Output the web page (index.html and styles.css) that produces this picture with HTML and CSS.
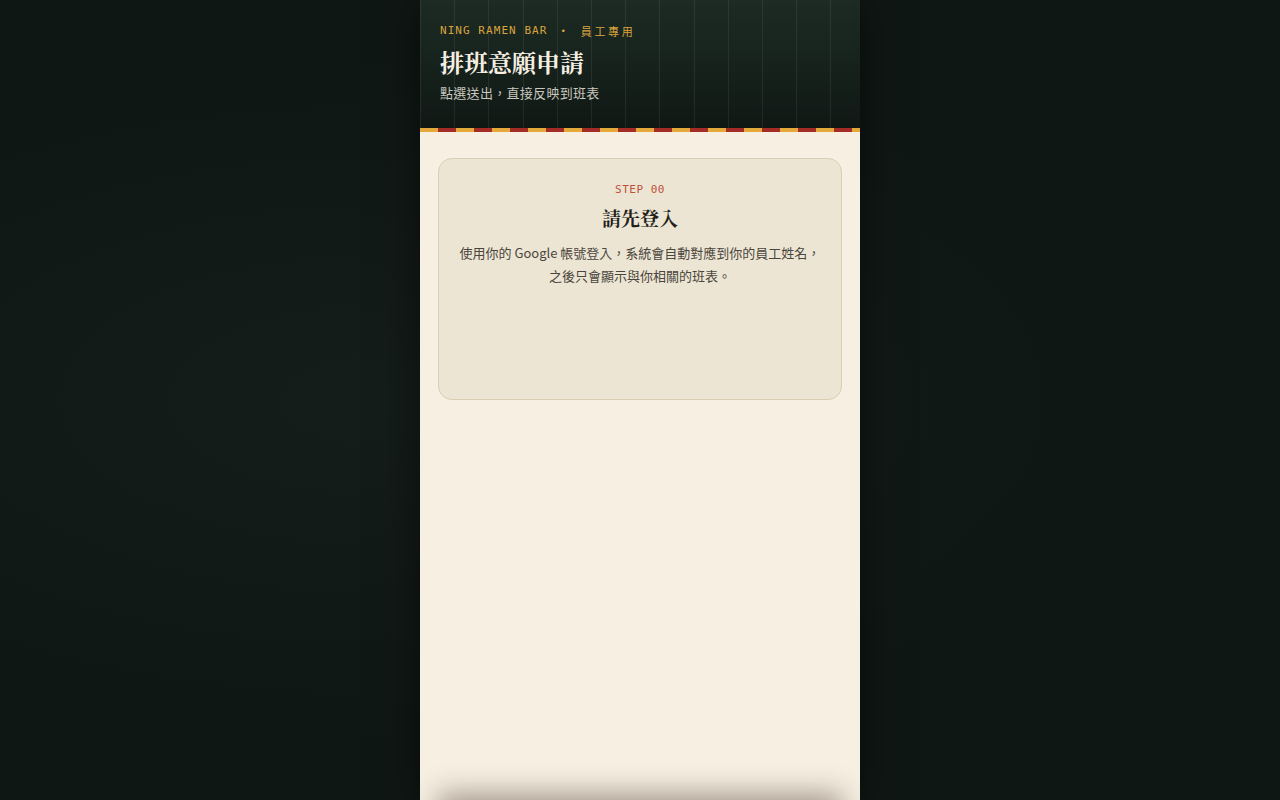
FILE: index.html
```html
<!DOCTYPE html>
<html lang="zh-Hant">
<head>
<meta charset="utf-8">
<title>排班意願申請</title>
<link rel="stylesheet" href="styles.css">
</head>
<body>
<div class="app">
  <header class="hero">
    <div class="brand"><span class="brand-en">NING RAMEN BAR</span><span class="brand-dot">•</span><span class="brand-zh">員工專用</span></div>
    <h1 class="hero-title">排班意願申請</h1>
    <p class="hero-sub">點選送出，直接反映到班表</p>
  </header>
  <div class="stripe"></div>
  <main class="content">
    <section class="card">
      <div class="step">STEP 00</div>
      <h2 class="card-title">請先登入</h2>
      <p class="card-text">使用你的 Google 帳號登入，系統會自動對應到你的員工姓名，之後只會顯示與你相關的班表。</p>
    </section>
  </main>
  <div class="dock"></div>
</div>
</body>
</html>
```

FILE: styles.css
```css
* { box-sizing: border-box; }
html, body { margin: 0; padding: 0; height: 100%; }
body {
  background: #0f1714;
  background-image: radial-gradient(ellipse at 30% 50%, #141d19 0%, #0f1714 60%);
  font-family: "Noto Sans CJK TC", "Noto Sans", sans-serif;
  overflow: hidden;
}
.app {
  width: 440px;
  min-height: 100vh;
  margin: 0 auto;
  background: #f6efe2;
  box-shadow: 0 0 40px rgba(0, 0, 0, 0.55);
  display: flex;
  flex-direction: column;
}
.hero {
  height: 128px;
  padding: 22px 20px 0;
  background-color: #131c18;
  background-image:
    repeating-linear-gradient(90deg, rgba(255,255,255,0.07) 0 1px, transparent 1px 34.2px),
    linear-gradient(180deg, #1d2b24 0%, #16211c 55%, #101814 100%);
}
.brand {
  font-family: "DejaVu Sans Mono", "Liberation Mono", monospace;
  font-size: 11px;
  line-height: 18px;
  color: #d9a43c;
  display: flex;
  align-items: center;
  white-space: nowrap;
}
.brand-en { letter-spacing: 1.05px; }
.brand-dot { margin: 0 15px 0 13px; font-size: 9px; }
.brand-zh { font-family: "Noto Sans CJK TC", sans-serif; letter-spacing: 2.6px; font-size: 11px; }
.hero-title {
  margin: 6px 0 0;
  font-family: "Noto Serif CJK TC", "Noto Serif TC", "Source Han Serif TC", serif;
  font-weight: 700;
  font-size: 24px;
  line-height: 32px;
  color: #f5efe2;
}
.hero-sub {
  margin: 6px 0 0;
  font-size: 13px;
  line-height: 18px;
  color: #c9c8bf;
  letter-spacing: 0.3px;
}
.stripe {
  height: 4px;
  background: repeating-linear-gradient(90deg, #e5a83b 0 18px, #a32d26 18px 36px);
}
.content {
  flex: 1;
  padding: 26px 18px;
}
.card {
  min-height: 242px;
  background: #ede5d3;
  border: 1px solid #d9cdb3;
  border-radius: 14px;
  padding: 22px 20px;
  text-align: center;
}
.step {
  font-family: "DejaVu Sans Mono", "Liberation Mono", monospace;
  font-size: 11px;
  line-height: 18px;
  letter-spacing: 0.5px;
  color: #c0503a;
}
.card-title {
  margin: 5px 0 0;
  font-family: "Noto Serif CJK TC", "Noto Serif TC", "Source Han Serif TC", serif;
  font-weight: 700;
  font-size: 19px;
  line-height: 28px;
  color: #231f1a;
}
.card-text {
  margin: 9px 0 0;
  font-size: 13px;
  line-height: 23px;
  color: #4a453d;
}
.dock {
  position: fixed;
  left: 50%;
  bottom: 0;
  width: 404px;
  height: 60px;
  transform: translate(-50%, 100%);
  background: #f6efe2;
  box-shadow: 0 -6px 28px rgba(60, 45, 30, 0.45);
}
```
